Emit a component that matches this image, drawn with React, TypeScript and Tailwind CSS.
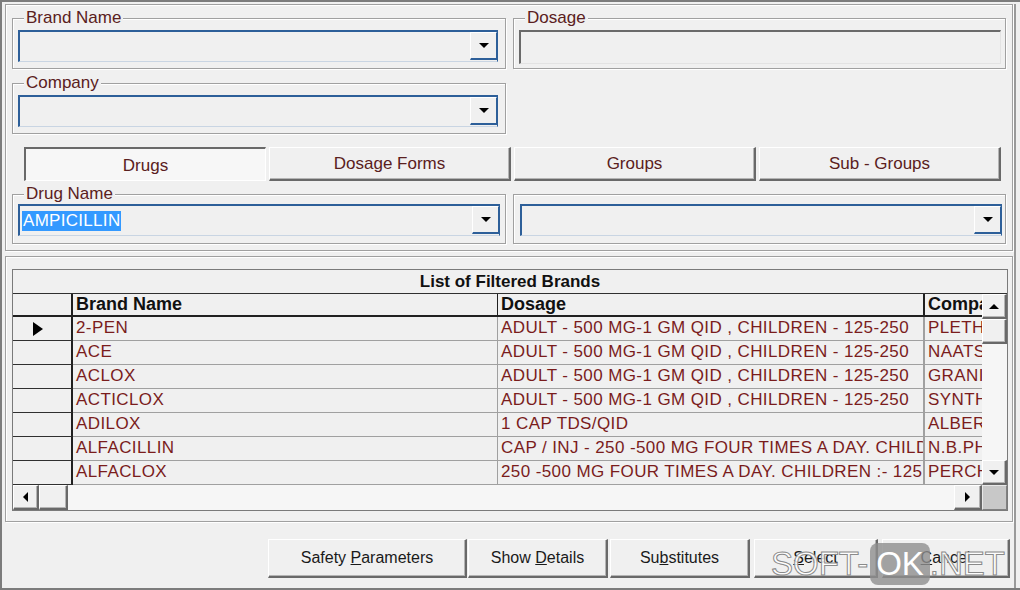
import React from "react";

const raised =
  "bg-[#f0f0f0] border-t border-l border-t-white border-l-white border-r-2 border-b-2 border-r-[#696969] border-b-[#696969] shadow-[inset_-1px_-1px_0_#b4b4b4]";

function Arrow({ dir }: { dir: "down" | "up" | "left" | "right" }) {
  const pts: Record<string, string> = {
    down: "0,0 10,0 5,5",
    up: "0,5 10,5 5,0",
    left: "5,0 5,10 0,5",
    right: "0,0 0,10 5,5",
  };
  const vert = dir === "down" || dir === "up";
  return (
    <svg width={vert ? 10 : 5} height={vert ? 5 : 10} viewBox={vert ? "0 0 10 5" : "0 0 5 10"}>
      <polygon points={pts[dir]} fill="#000" />
    </svg>
  );
}

function Combo({ children }: { children?: React.ReactNode }) {
  return (
    <div className="flex h-[32px] bg-[#f0f0f0] border-t-2 border-l-2 border-t-[#2d5f99] border-l-[#2d5f99] border-r border-b border-r-[#2d5f99] border-b-[#c9d5e3]">
      <div className="flex-1 flex items-center pl-[2px] text-[17px] leading-[20px]">{children}</div>
      <div className="w-[27px] h-[28px] flex items-center justify-center bg-[#f0f0f0] border-t border-l border-t-white border-l-white border-r border-b-2 border-r-[#2d5f99] border-b-[#2d5f99]">
        <Arrow dir="down" />
      </div>
    </div>
  );
}

function Group({
  label,
  className,
  children,
}: {
  label?: string;
  className: string;
  children?: React.ReactNode;
}) {
  return (
    <div
      className={`relative border border-[#a0a0a0] shadow-[inset_1px_1px_0_#ffffff,1px_1px_0_#ffffff] ${className}`}
    >
      {label && (
        <span className="absolute left-[11px] top-[-10px] bg-[#f0f0f0] px-[2px] text-[17px] leading-[18px] text-[#5a2020]">
          {label}
        </span>
      )}
      {children}
    </div>
  );
}

const rows: [string, string, string][] = [
  ["2-PEN", "ADULT - 500 MG-1 GM QID , CHILDREN - 125-250", "PLETHICO"],
  ["ACE", "ADULT - 500 MG-1 GM QID , CHILDREN - 125-250", "NAATSCO"],
  ["ACLOX", "ADULT - 500 MG-1 GM QID , CHILDREN - 125-250", "GRANITE"],
  ["ACTICLOX", "ADULT - 500 MG-1 GM QID , CHILDREN - 125-250", "SYNTHIKO"],
  ["ADILOX", "1 CAP TDS/QID", "ALBERT"],
  ["ALFACILLIN", "CAP / INJ - 250 -500 MG FOUR TIMES A DAY. CHILDREN", "N.B.PHARMA"],
  ["ALFACLOX", "250 -500 MG FOUR TIMES A DAY. CHILDREN :- 125", "PERCH"],
];

function Tab({ label, pressed }: { label: string; pressed?: boolean }) {
  return (
    <div
      className={
        pressed
          ? "w-[242px] h-[34px] flex items-center justify-center pt-[2px] bg-[#f7f7f7] border-t-2 border-l-2 border-t-[#696969] border-l-[#696969] border-r border-b border-r-white border-b-white text-[17px] text-[#5a2020]"
          : `w-[242px] h-[34px] flex items-center justify-center ${raised} text-[17px] text-[#5a2020]`
      }
    >
      {label}
    </div>
  );
}

function BottomButton({ className, children }: { className: string; children: React.ReactNode }) {
  return (
    <div className={`h-[39px] flex items-center justify-center ${raised} text-[16px] text-[#1a1a1a] ${className}`}>
      {children}
    </div>
  );
}

export default function App() {
  return (
    <div className="relative w-[1020px] h-[590px] overflow-hidden bg-[#f0f0f0] border-l-2 border-t-2 border-b-2 border-[#7c7c7c] font-['Liberation_Sans',Arial,sans-serif]">
      <div className="w-[1014px] h-full border-r-2 border-r-[#9a9a9a]">
        {/* Top panel */}
        <div className="ml-[3px] mt-[2px] w-[1008px] h-[247px] border border-[#a0a0a0] shadow-[inset_1px_1px_0_#ffffff,1px_1px_0_#ffffff] pl-[6px] pt-[13px]">
          <div className="flex gap-[7px]">
            <Group label="Brand Name" className="w-[494px] h-[51px] pl-[5px] pt-[11px]">
              <div className="w-[480px]">
                <Combo />
              </div>
            </Group>
            <Group label="Dosage" className="w-[493px] h-[51px] pl-[5px] pt-[11px]">
              <div className="w-[482px] h-[34px] bg-[#f0f0f0] border-t-2 border-l-2 border-t-[#6a6a6a] border-l-[#6a6a6a] border-r border-b border-r-[#e3e3e3] border-b-[#e3e3e3]" />
            </Group>
          </div>
          <div className="mt-[14px]">
            <Group label="Company" className="w-[494px] h-[51px] pl-[5px] pt-[11px]">
              <div className="w-[480px]">
                <Combo />
              </div>
            </Group>
          </div>
          <div className="mt-[13px] ml-[12px] flex gap-[3px]">
            <Tab label="Drugs" pressed />
            <Tab label="Dosage Forms" />
            <Tab label="Groups" />
            <Tab label="Sub - Groups" />
          </div>
          <div className="mt-[13px] flex gap-[7px]">
            <Group label="Drug Name" className="w-[494px] h-[50px] pl-[5px] pt-[9px]">
              <div className="w-[482px]">
                <Combo>
                  <span className="bg-[#3399ff] text-white px-[1px] leading-[20px] tracking-[0.3px]">AMPICILLIN</span>
                </Combo>
              </div>
            </Group>
            <Group className="w-[493px] h-[50px] pl-[6px] pt-[9px]">
              <div className="w-[482px]">
                <Combo />
              </div>
            </Group>
          </div>
        </div>

        {/* Lower panel with grid */}
        <div className="ml-[3px] mt-[5px] w-[1008px] h-[266px] border border-[#a0a0a0] shadow-[inset_1px_1px_0_#ffffff,1px_1px_0_#ffffff] pl-[6px] pt-[12px]">
          <div className="w-[996px] h-[242px] border border-[#7a7a7a] bg-[#f0f0f0] flex flex-col">
            <div className="h-[24px] shrink-0 border-b border-b-[#303030] flex items-center justify-center font-bold text-[17px] text-[#111]">
              List of Filtered Brands
            </div>
            <div className="flex h-[191px] shrink-0">
              <div className="w-[969px] overflow-hidden">
                {/* header */}
                <div className="flex h-[23px] border-b-2 border-b-[#202020] font-bold text-[18px] leading-[21px] text-[#111]">
                  <div className="w-[60px] shrink-0 border-r-2 border-r-[#202020]" />
                  <div className="w-[425px] shrink-0 border-r border-r-[#202020] pl-[3px] whitespace-nowrap overflow-hidden">Brand Name</div>
                  <div className="w-[427px] shrink-0 border-r-2 border-r-[#202020] pl-[3px] whitespace-nowrap overflow-hidden">Dosage</div>
                  <div className="w-[57px] shrink-0 pl-[3px] whitespace-nowrap overflow-hidden">Company</div>
                </div>
                {rows.map((r, i) => (
                  <div key={i} className="flex h-[24px] text-[17px] leading-[22px] tracking-[0.4px] text-[#7a1c1c]">
                    <div className="w-[60px] shrink-0 border-r-2 border-r-[#202020] border-b border-b-[#303030] flex items-center justify-center">
                      {i === 0 && (
                        <svg width="10" height="14" viewBox="0 0 10 14" className="mr-[8px]">
                          <polygon points="0,0 10,7 0,14" fill="#000" />
                        </svg>
                      )}
                    </div>
                    <div className="w-[425px] shrink-0 border-r border-r-[#a0a0a0] border-b border-b-[#a0a0a0] pl-[3px] whitespace-nowrap overflow-hidden">
                      {r[0]}
                    </div>
                    <div className="w-[427px] shrink-0 border-r-2 border-r-[#a0a0a0] border-b border-b-[#a0a0a0] pl-[3px] pr-[26px] whitespace-nowrap overflow-hidden">
                      {r[1]}
                    </div>
                    <div className="w-[57px] shrink-0 border-b border-b-[#a0a0a0] pl-[3px] whitespace-nowrap overflow-hidden">
                      {r[2]}
                    </div>
                  </div>
                ))}
              </div>
              {/* vertical scrollbar */}
              <div className="w-[25px] shrink-0 flex flex-col bg-[#f6f6f6]">
                <div className={`h-[25px] flex items-center justify-center ${raised}`}>
                  <Arrow dir="up" />
                </div>
                <div className={`h-[25px] ${raised}`} />
                <div className="flex-1" />
                <div className={`h-[25px] flex items-center justify-center ${raised}`}>
                  <Arrow dir="down" />
                </div>
              </div>
            </div>
            {/* horizontal scrollbar */}
            <div className="flex flex-1 bg-[#f6f6f6]">
              <div className={`w-[26px] flex items-center justify-center ${raised}`}>
                <Arrow dir="left" />
              </div>
              <div className={`w-[29px] ${raised}`} />
              <div className="flex-1" />
              <div className={`w-[28px] flex items-center justify-center ${raised}`}>
                <Arrow dir="right" />
              </div>
              <div className="w-[25px] bg-[#c8c8c8] border-t border-l border-t-[#e8e8e8] border-l-[#e8e8e8] border-r border-b border-r-[#808080] border-b-[#808080]" />
            </div>
          </div>
        </div>

        {/* Bottom buttons */}
        <div className="mt-[17px] ml-[266px] flex">
          <BottomButton className="w-[199px]">
            Safety&nbsp;<span className="underline">P</span>arameters
          </BottomButton>
          <BottomButton className="w-[140px] ml-[1px]">
            Show&nbsp;<span className="underline">D</span>etails
          </BottomButton>
          <BottomButton className="w-[140px] ml-[2px]">
            Su<span className="underline">b</span>stitutes
          </BottomButton>
          <BottomButton className="w-[124px] ml-[4px]">
            <span className="underline">S</span>elect
          </BottomButton>
          <BottomButton className="w-[128px] ml-[4px]">
            <span className="underline">C</span>ancel
          </BottomButton>
        </div>
      </div>

      {/* Watermark overlay */}
      <div className="absolute left-[769px] top-[541px] flex items-center text-[33px] leading-[38px] text-white/85 [-webkit-text-stroke:1px_#8a8a8a] font-['Liberation_Sans',Arial,sans-serif]">
        <span>SOFT-</span>
        <span className="ml-[2px] px-[6px] h-[42px] flex items-center rounded-[8px] bg-[#8e8e8e]/80 text-white [-webkit-text-stroke:0px]">OK</span>
        <span>.NET</span>
      </div>
    </div>
  );
}
